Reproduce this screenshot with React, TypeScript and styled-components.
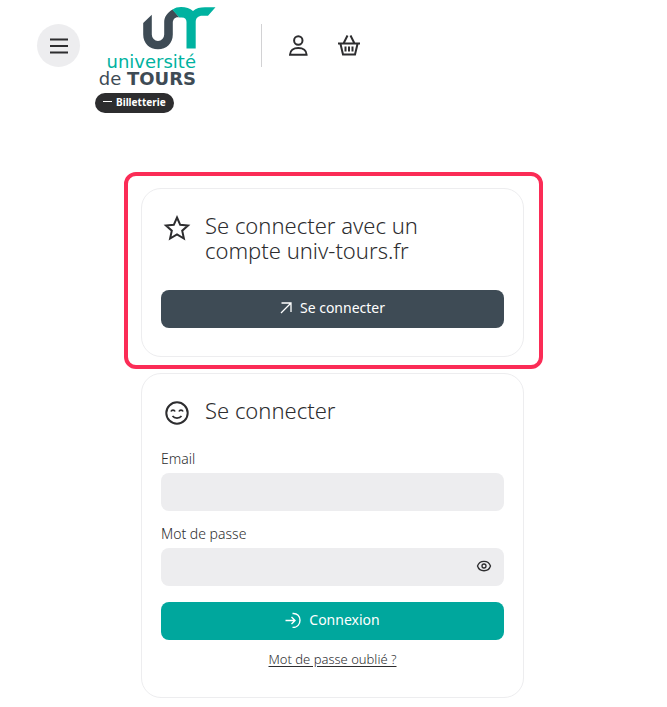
import React, { useState } from "react";
import styled, { createGlobalStyle } from "styled-components";

const ink = "#2d2d2f";
const slate = "#3e4b55";
const teal = "#00a79d";
const logoTeal = "#00b2a0";

const GlobalStyle = createGlobalStyle`
  *, *::before, *::after { box-sizing: border-box; }
  body {
    margin: 0;
    background: #fff;
    color: ${ink};
    font-family: "Noto Sans", sans-serif;
    font-weight: 300;
  }
`;

const Header = styled.header`
  display: flex;
  align-items: flex-start;
  padding: 7px 37px 0;
`;

const RoundButton = styled.button`
  display: grid;
  place-items: center;
  width: 43px;
  height: 43px;
  margin: 17px 15px 0 0;
  padding: 0;
  border: 0;
  border-radius: 50%;
  background: #ededef;
  color: ${ink};
  cursor: pointer;
`;

const Brand = styled.a`
  display: flex;
  flex-direction: column;
  align-items: flex-start;
  width: 121px;
  color: inherit;
  text-decoration: none;
`;

const Emblem = styled.svg`
  display: block;
  align-self: flex-end;
`;

const Wordmark = styled.span`
  display: flex;
  flex-direction: column;
  align-items: flex-end;
  width: 101px;
  padding-top: 3px;
  font-family: "DejaVu Sans", sans-serif;
  font-size: 18px;
  line-height: 17px;
  font-weight: 400;
  white-space: nowrap;
  color: ${slate};

  strong { font-weight: 700; }
`;

const WordmarkTop = styled.span`
  color: ${logoTeal};
`;

const Tag = styled.span`
  display: flex;
  align-items: center;
  gap: 4px;
  height: 20px;
  margin-top: 6px;
  padding: 0 8px 3px;
  border-radius: 10px;
  background: ${ink};
  color: #fff;
  font-size: 10px;
  line-height: 16px;
  font-weight: 700;
  white-space: nowrap;

  &::before {
    content: "";
    width: 9px;
    height: 1px;
    background: #fff;
  }
`;

const Tools = styled.nav`
  display: flex;
  align-items: center;
  gap: 27px;
  height: 43px;
  margin: 17px 0 0 45px;
  padding-left: 24px;
  border-left: 1px solid #d2d2d4;
`;

const IconLink = styled.a`
  display: flex;
  color: ${ink};
`;

const Main = styled.main`
  display: flex;
  flex-direction: column;
  gap: 16px;
  width: 100%;
  max-width: 417px;
  margin: 0 auto;
  padding: 75px 18px 9px 16px;
`;

const Card = styled.section`
  position: relative;
  padding: 24px 19px 28px;
  border: 1px solid #ededef;
  border-radius: 20px;
`;

const Highlight = styled.span`
  position: absolute;
  inset: -17px -20px -13px -18px;
  border: 4px solid #fb2c56;
  border-radius: 12px;
  pointer-events: none;
`;

const CardHeader = styled.div<{ $gap: number }>`
  display: flex;
  gap: 12px;
  margin-bottom: ${(p) => p.$gap}px;
  padding-right: 48px;

  svg { flex: none; }
`;

const Title = styled.h2`
  margin: 0;
  font-size: 22px;
  line-height: 25px;
  font-weight: 300;
`;

const ActionButton = styled.button<{ $tone: string }>`
  display: flex;
  align-items: center;
  justify-content: center;
  gap: 8px;
  width: 100%;
  height: 38px;
  padding: 0 0 2px;
  border: 0;
  border-radius: 8px;
  background: ${(p) => p.$tone};
  color: #fff;
  font: 400 14px/20px "Noto Sans", sans-serif;
  cursor: pointer;
`;

const Field = styled.div`
  display: flex;
  flex-direction: column;
  gap: 3px;
  margin-bottom: 12px;
`;

const Label = styled.label`
  font-size: 14px;
  line-height: 22px;
`;

const InputShell = styled.div`
  display: flex;
  align-items: center;
  height: 38px;
  padding: 0 12px;
  border-radius: 8px;
  background: #ededef;
`;

const TextInput = styled.input`
  flex: 1;
  min-width: 0;
  height: 100%;
  padding: 0;
  border: 0;
  outline: 0;
  background: transparent;
  color: ${ink};
  font: 300 14px/20px "Noto Sans", sans-serif;
`;

const RevealButton = styled.button`
  display: flex;
  padding: 0 0 2px;
  border: 0;
  background: none;
  color: ${ink};
  cursor: pointer;
`;

const Submit = styled.div`
  padding-top: 4px;
`;

const ForgotLink = styled.a`
  display: block;
  width: fit-content;
  margin: 9px auto 0;
  color: ${ink};
  font-size: 13px;
  line-height: 20px;
  text-underline-offset: 2px;
`;

type IconProps = { size: number; box?: number; weight?: number; children: React.ReactNode };

const Icon = ({ size, box = 24, weight = 2, children }: IconProps) => (
  <svg
    width={size}
    height={size}
    viewBox={`0 0 ${box} ${box}`}
    fill="none"
    stroke="currentColor"
    strokeWidth={weight}
    aria-hidden="true"
  >
    {children}
  </svg>
);

export default function App() {
  const [visible, setVisible] = useState(false);

  return (
    <>
      <GlobalStyle />
      <Header>
        <RoundButton type="button" aria-label="Menu">
          <Icon size={20} box={20}>
            <path d="M1 3.5h18M1 10h18M1 16.5h18" />
          </Icon>
        </RoundButton>
        <Brand href="#" aria-label="Université de Tours, Billetterie">
          <Emblem width="73" height="43" viewBox="143 7 73 43" fill="none" aria-hidden="true">
            <path
              d="M143.2 23L151.8 14.8V34.5A5.7 5.9 0 0 0 164.2 34.5V22C164.2 17 167 13 172.5 9.5L179.5 17.5C175.5 16.5 172.8 19 172.8 23V34.5C172.8 43.5 166.5 49.2 158 49.2C149.5 49.2 143.2 43.5 143.2 34.5Z"
              fill={slate}
            />
            <path
              d="M172.3 9.8C175 7.700 178 7 181 7C186 7 190 8.2 193 11C196 8.3 200 7.3 205 7.3H215.5L208 15.7H202.5C198 15.7 195.7 18 195.7 22V48.5H186.5V22C186.5 18.5 184.5 16.8 179.5 17.6Z"
              fill={logoTeal}
            />
          </Emblem>
          <Wordmark>
            <WordmarkTop>université</WordmarkTop>
            <span>
              de <strong>TOURS</strong>
            </span>
          </Wordmark>
          <Tag>Billetterie</Tag>
        </Brand>
        <Tools aria-label="Compte et panier">
          <IconLink href="#" aria-label="Mon compte">
            <Icon size={24}>
              <circle cx="12.3" cy="6.500" r="4.2" />
              <path d="M4 20.800C4 16.500 7.500 14.100 12.300 14.100S20.600 16.500 20.600 20.800Z" />
            </Icon>
          </IconLink>
          <IconLink href="#" aria-label="Panier">
            <Icon size={24}>
              <path d="M1 9.500H23M3.500 10L6 20.500H18L20.500 10M6.500 9.500L10.500 1.500M17.500 9.500L13.500 1.500M8.500 12.500V17.500M12 12.500V17.500M15.500 12.500V17.500" />
            </Icon>
          </IconLink>
        </Tools>
      </Header>

      <Main>
        <Card>
          <Highlight />
          <CardHeader $gap={27}>
            <Icon size={32} box={32}>
              <path d="M16 4.500L19.2 11.8L27 12.500L21.2 17.700L22.9 25.500L16 21.500L9.1 25.500L10.8 17.700L5 12.500L12.8 11.800Z" />
            </Icon>
            <Title>Se connecter avec un compte univ-tours.fr</Title>
          </CardHeader>
          <ActionButton type="button" $tone={slate}>
            <Icon size={12} box={12} weight={1.3}>
              <path d="M1 11L11 1M1.500 1H11V10" />
            </Icon>
            Se connecter
          </ActionButton>
        </Card>

        <Card as="form" onSubmit={(e: React.FormEvent) => e.preventDefault()}>
          <CardHeader $gap={18}>
            <Icon size={32} box={32}>
              <circle cx="16" cy="15" r="10.7" />
              <path
                d="M10 13.500C10.700 11.700 13.300 11.700 14 13.500M18 13.500C18.700 11.700 21.300 11.700 22 13.500M11.500 18C13.500 20.800 18.500 20.800 20.500 18"
                strokeWidth="1.7"
              />
            </Icon>
            <Title>Se connecter</Title>
          </CardHeader>
          <Field>
            <Label htmlFor="email">Email</Label>
            <InputShell>
              <TextInput id="email" type="email" />
            </InputShell>
          </Field>
          <Field>
            <Label htmlFor="password">Mot de passe</Label>
            <InputShell>
              <TextInput id="password" type={visible ? "text" : "password"} />
              <RevealButton
                type="button"
                aria-label="Afficher le mot de passe"
                onClick={() => setVisible(!visible)}
              >
                <Icon size={16} box={16} weight={1.3}>
                  <path d="M1.500 8C3.500 1.700 12.500 1.700 14.500 8C12.500 14.300 3.500 14.300 1.500 8Z" />
                  <circle cx="8" cy="8" r="2" />
                </Icon>
              </RevealButton>
            </InputShell>
          </Field>
          <Submit>
            <ActionButton type="submit" $tone={teal}>
              <Icon size={16} box={16} weight={1.4}>
                <path d="M0.500 8.500H10M6.500 5L10 8.500L6.500 12M7.500 1.500C17.500 0.500 17.500 16 7.500 15.500" />
              </Icon>
              Connexion
            </ActionButton>
          </Submit>
          <ForgotLink href="#">Mot de passe oublié ?</ForgotLink>
        </Card>
      </Main>
    </>
  );
}
